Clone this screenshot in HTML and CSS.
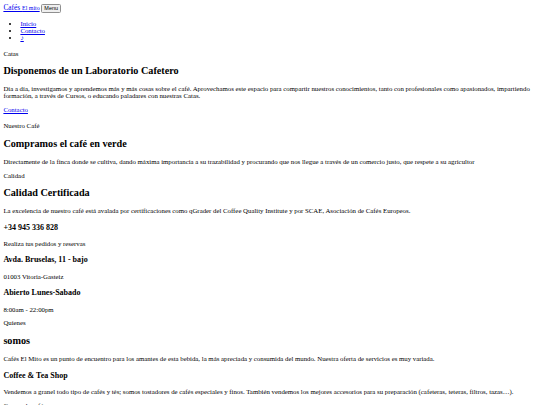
FILE: index.html
```html
<!DOCTYPE html>
<html lang="es">
<head>
<meta charset="utf-8">
<title>Cafés El Mito</title>
<link rel="stylesheet" href="styles.css">
</head>
<body>
<header class="site-header">
  <a class="brand" href="#">Cafés <small class="brand-sub">El mito</small></a>
  <button class="menu-btn" type="button">Menu</button>
  <ul class="nav">
    <li><a href="#">Inicio</a></li>
    <li><a href="#">Contacto</a></li>
    <li><a href="#" class="nav-icon">♪</a></li>
  </ul>
</header>
<main>
  <section class="block">
    <p>Catas</p>
    <h2>Disponemos de un Laboratorio Cafetero</h2>
    <p>Día a día, investigamos y aprendemos más y más cosas sobre el café. Aprovechamos este espacio para compartir nuestros conocimientos, tanto con profesionales como apasionados, impartiendo formación, a través de Cursos, o educando paladares con nuestras Catas.</p>
    <p class="cta"><a href="#">Contacto</a></p>
  </section>
  <section class="block">
    <p>Nuestro Café</p>
    <h2>Compramos el café en verde</h2>
    <p>Directamente de la finca donde se cultiva, dando máxima importancia a su trazabilidad y procurando que nos llegue a través de un comercio justo, que respete a su agricultor</p>
  </section>
  <section class="block">
    <p>Calidad</p>
    <h2>Calidad Certificada</h2>
    <p>La excelencia de nuestro café está avalada por certificaciones como qGrader del Coffee Quality Institute y por SCAE, Asociación de Cafés Europeos.</p>
  </section>
  <section class="block">
    <h3>+34 945 336 828</h3>
    <p>Realiza tus pedidos y reservas</p>
    <h3>Avda. Bruselas, 11 - bajo</h3>
    <p>01003 Vitoria-Gasteiz</p>
    <h3>Abierto Lunes-Sabado</h3>
    <p>8:00am - 22:00pm</p>
  </section>
  <section class="block">
    <p>Quienes</p>
    <h2>somos</h2>
    <p>Cafés El Mito es un punto de encuentro para los amantes de esta bebida, la más apreciada y consumida del mundo. Nuestra oferta de servicios es muy variada.</p>
    <h3>Coffee &amp; Tea Shop</h3>
    <p>Vendemos a granel todo tipo de cafés y tés; somos tostadores de cafés especiales y finos. También vendemos los mejores accesorios para su preparación (cafeteras, teteras, filtros, tazas…).</p>
    <p>Cursos de café</p>
  </section>
</main>
</body>
</html>
```
FILE: styles.css
```css
html {
  background: #fff;
}
body {
  margin: 3.4px;
  font-family: "Liberation Serif", "Times New Roman", serif;
  font-size: 6.8px;
  color: #000;
}
a {
  color: #0000ee;
}
.brand {
  font-size: 7.4px;
}
.brand-sub {
  font-size: 0.8em;
}
.menu-btn {
  font-family: "Liberation Sans", Arial, sans-serif;
  font-size: 5.5px;
  padding: 0.6px 2px;
  margin: 0;
  border: 1px solid #8f8f8f;
  border-radius: 1.5px;
  background: #efefef;
  color: #000;
}
.nav {
  margin: 6.8px 0 8.8px;
  padding-left: 17px;
}
p {
  margin: 6.8px 0;
}
.cta {
  margin-bottom: 8.8px;
}
h2 {
  font-size: 10.2px;
  margin: 8.9px 0;
}
h3 {
  font-size: 8px;
  margin: 8.4px 0;
}
```
